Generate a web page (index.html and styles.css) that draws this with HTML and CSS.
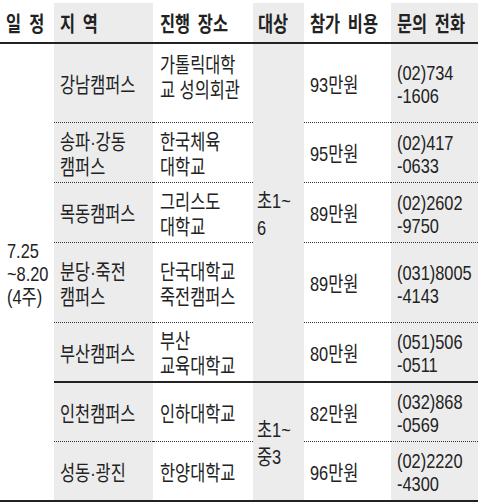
FILE: index.html
```html
<!DOCTYPE html>
<html lang="ko">
<head>
<meta charset="utf-8">
<link rel="stylesheet" href="styles.css">
</head>
<body>
<div class="wrap">
<table class="sched">
  <colgroup>
    <col class="w1">
    <col class="w2 g">
    <col class="w3">
    <col class="w4 g">
    <col class="w5">
    <col class="w6 g">
  </colgroup>
  <thead>
    <tr class="hd">
      <th class="p1"><span class="t">일&ensp;정</span></th>
      <th class="p2"><span class="t">지 역</span></th>
      <th class="p3"><span class="t">진행 장소</span></th>
      <th class="p4"><span class="t">대상</span></th>
      <th class="p5"><span class="t">참가 비용</span></th>
      <th class="p6"><span class="t">문의 전화</span></th>
    </tr>
  </thead>
  <tbody>
    <tr class="r1">
      <td class="p1 bot date" rowspan="7"><span class="t">7.25<br>~8.20<br>(4주)</span></td>
      <td class="p2"><span class="t">강남캠퍼스</span></td>
      <td class="p3 lift"><span class="t">가톨릭대학<br>교 성의회관</span></td>
      <td class="p4 grade" rowspan="5"><span class="t">초1~<br>6</span></td>
      <td class="p5"><span class="t">93만원</span></td>
      <td class="p6 tel"><span class="t">(02)734<br>-1606</span></td>
    </tr>
    <tr class="r2">
      <td class="p2 dot"><span class="t">송파·강동<br>캠퍼스</span></td>
      <td class="p3 dot"><span class="t">한국체육<br>대학교</span></td>
      <td class="p5 dot"><span class="t">95만원</span></td>
      <td class="p6 dot tel"><span class="t">(02)417<br>-0633</span></td>
    </tr>
    <tr class="r3">
      <td class="p2 dot"><span class="t">목동캠퍼스</span></td>
      <td class="p3 dot"><span class="t">그리스도<br>대학교</span></td>
      <td class="p5 dot"><span class="t">89만원</span></td>
      <td class="p6 dot tel"><span class="t">(02)2602<br>-9750</span></td>
    </tr>
    <tr class="r4">
      <td class="p2 dot"><span class="t">분당·죽전<br>캠퍼스</span></td>
      <td class="p3 dot"><span class="t">단국대학교<br>죽전캠퍼스</span></td>
      <td class="p5 dot"><span class="t">89만원</span></td>
      <td class="p6 dot tel"><span class="t">(031)8005<br>-4143</span></td>
    </tr>
    <tr class="r5">
      <td class="p2 dot"><span class="t">부산캠퍼스</span></td>
      <td class="p3 dot"><span class="t">부산<br>교육대학교</span></td>
      <td class="p5 dot"><span class="t">80만원</span></td>
      <td class="p6 dot tel"><span class="t">(051)506<br>-0511</span></td>
    </tr>
    <tr class="r6">
      <td class="p2 solid"><span class="t">인천캠퍼스</span></td>
      <td class="p3 solid"><span class="t">인하대학교</span></td>
      <td class="p4 solid bot grade" rowspan="2"><span class="t">초1~<br>중3</span></td>
      <td class="p5 solid"><span class="t">82만원</span></td>
      <td class="p6 solid tel"><span class="t">(032)868<br>-0569</span></td>
    </tr>
    <tr class="r7">
      <td class="p2 dot bot"><span class="t">성동·광진</span></td>
      <td class="p3 dot bot"><span class="t">한양대학교</span></td>
      <td class="p5 dot bot"><span class="t">96만원</span></td>
      <td class="p6 dot bot tel"><span class="t">(02)2220<br>-4300</span></td>
    </tr>
  </tbody>
</table>
</div>
</body>
</html>
```
FILE: styles.css
```css
* { box-sizing: border-box; }
html, body { margin: 0; padding: 0; background: #fff; }
body {
  font-family: "Liberation Sans", "Noto Sans CJK KR", sans-serif;
  color: #222;
}
.wrap { padding-top: 3px; }

.sched {
  border-collapse: separate;
  border-spacing: 0;
  table-layout: fixed;
  width: 478px;
}
.w1 { width: 54px; }
.w2 { width: 99px; }
.w3 { width: 100px; }
.w4 { width: 51px; }
.w5 { width: 87px; }
.w6 { width: 87px; }
.g { background: #ececec; }

.sched th, .sched td {
  padding: 0;
  vertical-align: middle;
  text-align: left;
  font-size: 21px;
  line-height: 25px;
  white-space: nowrap;
  overflow: visible;
}
.sched th {
  font-weight: 700;
  word-spacing: 4px;
  border-bottom: 2px solid #222;
  padding-top: 1px;
}
.sched td { font-weight: 400; padding-top: 2px; }

.t {
  display: inline-block;
  transform: scaleX(0.78);
  transform-origin: 0 50%;
}

.sched .p1 { padding-left: 7px; }
.sched th.p1 { padding-left: 6px; }
.sched .p2 { padding-left: 6px; }
.sched .p3 { padding-left: 7px; }
.sched .p4 { padding-left: 4px; }
.sched th.p4 { padding-left: 5px; }
.sched .p5 { padding-left: 6px; }
.sched .p6 { padding-left: 6px; }

.sched .date { line-height: 23px; }
.sched .grade { line-height: 27px; }
.sched .tel { line-height: 23px; }
.sched .lift { padding-bottom: 15px; }

.sched .dot { border-top: 1px dotted #333; }
.sched .solid { border-top: 2px solid #222; }
.sched .bot { border-bottom: 2px solid #222; }

.hd { height: 41px; }
.r1 { height: 78px; }
.r2 { height: 60px; }
.r3 { height: 60px; }
.r4 { height: 80px; }
.r5 { height: 59px; }
.r6 { height: 60px; }
.r7 { height: 61px; }
```
